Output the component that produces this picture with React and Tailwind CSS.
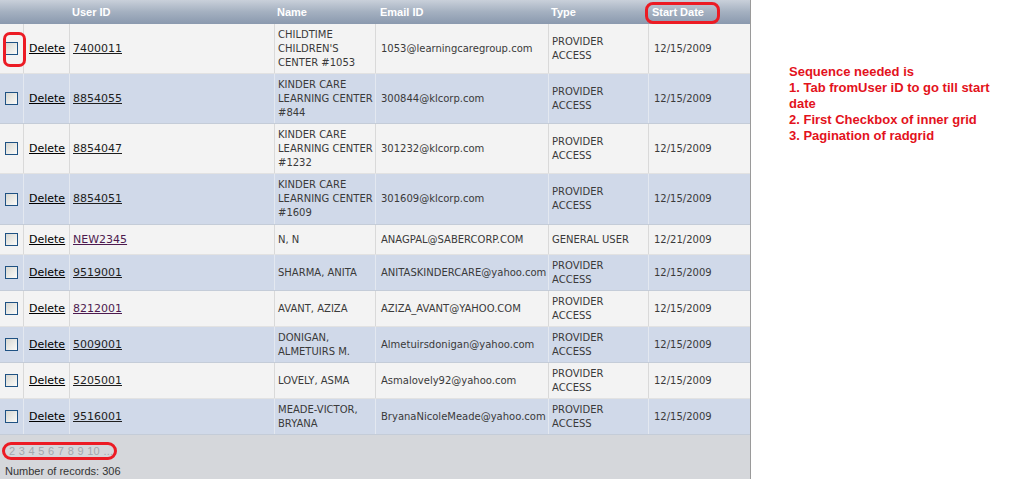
const cols = 'grid grid-cols-[23px_46px_205px_101px_173px_100px_103px]';

const users = [
  { id: '7400011', name: ['CHILDTIME', "CHILDREN'S", 'CENTER #1053'], email: '1053@learningcaregroup.com', type: ['PROVIDER', 'ACCESS'], date: '12/15/2009', h: 'h-[50px]' },
  { id: '8854055', name: ['KINDER CARE', 'LEARNING CENTER', '#844'], email: '300844@klcorp.com', type: ['PROVIDER', 'ACCESS'], date: '12/15/2009', h: 'h-[50px]' },
  { id: '8854047', name: ['KINDER CARE', 'LEARNING CENTER', '#1232'], email: '301232@klcorp.com', type: ['PROVIDER', 'ACCESS'], date: '12/15/2009', h: 'h-[50px]' },
  { id: '8854051', name: ['KINDER CARE', 'LEARNING CENTER', '#1609'], email: '301609@klcorp.com', type: ['PROVIDER', 'ACCESS'], date: '12/15/2009', h: 'h-[51px]' },
  { id: 'NEW2345', name: ['N, N'], email: 'ANAGPAL@SABERCORP.COM', type: ['GENERAL USER'], date: '12/21/2009', h: 'h-[30px]', visited: true },
  { id: '9519001', name: ['SHARMA, ANITA'], email: 'ANITASKINDERCARE@yahoo.com', type: ['PROVIDER', 'ACCESS'], date: '12/15/2009', h: 'h-[36px]' },
  { id: '8212001', name: ['AVANT, AZIZA'], email: 'AZIZA_AVANT@YAHOO.COM', type: ['PROVIDER', 'ACCESS'], date: '12/15/2009', h: 'h-[36px]', visited: true },
  { id: '5009001', name: ['DONIGAN,', 'ALMETUIRS M.'], email: 'Almetuirsdonigan@yahoo.com', type: ['PROVIDER', 'ACCESS'], date: '12/15/2009', h: 'h-[36px]' },
  { id: '5205001', name: ['LOVELY, ASMA'], email: 'Asmalovely92@yahoo.com', type: ['PROVIDER', 'ACCESS'], date: '12/15/2009', h: 'h-[36px]' },
  { id: '9516001', name: ['MEADE-VICTOR,', 'BRYANA'], email: 'BryanaNicoleMeade@yahoo.com', type: ['PROVIDER', 'ACCESS'], date: '12/15/2009', h: 'h-[36px]' },
];

function CheckBox() {
  return <span className="block w-[13px] h-[13px] border border-[#1f5283] bg-linear-to-br from-[#d8d8d2] to-[#fbfbf9]" />;
}

function Lines({ lines }) {
  return (
    <div className="whitespace-nowrap">
      {lines.map((l) => (
        <div key={l}>{l}</div>
      ))}
    </div>
  );
}

function UserRow({ u, alt }) {
  const bg = alt ? 'bg-[#d0d9e9] border-b border-[#c4ccd8]' : 'bg-[#f3f3f3] border-b border-[#e2e2e2]';
  const line = alt ? 'border-l border-[#e3e8f0]' : 'border-l border-[#d9d9d9]';
  return (
    <div className={`${cols} ${u.h} ${bg} text-[10px] leading-[14px] text-[#3a3a3a] font-['DejaVu_Sans',sans-serif]`}>
      <div className="flex items-center justify-center">
        <CheckBox />
      </div>
      <div className={`flex items-center pl-[5px] ${line}`}>
        <a className="text-[11px] text-black underline">Delete</a>
      </div>
      <div className={`flex items-center pl-[3px] ${line}`}>
        <a className={`text-[11px] underline ${u.visited ? 'text-[#4d1a4f]' : 'text-[#1e1e1e]'}`}>{u.id}</a>
      </div>
      <div className={`flex items-center pl-[3px] ${line}`}>
        <Lines lines={u.name} />
      </div>
      <div className={`flex items-center pl-[5px] whitespace-nowrap ${line}`}>{u.email}</div>
      <div className={`flex items-center pl-[3px] ${line}`}>
        <Lines lines={u.type} />
      </div>
      <div className={`flex items-center pl-[5px] ${line}`}>{u.date}</div>
    </div>
  );
}

export default function App() {
  return (
    <div className="flex w-[1019px] h-[479px] bg-white overflow-hidden">
      <div className="relative w-[751px] h-full flex flex-col border-r border-[#9a9a9a] bg-[#d5d7db]">
        {/* header */}
        <div className={`${cols} h-[24px] bg-linear-to-b from-[#c9d0da] via-[#a4b0c0] to-[#8a99ae] text-[11px] font-bold text-white font-['Liberation_Sans',Arial,sans-serif]`}>
          <div />
          <div />
          <div className="flex items-center pl-[3px]">User ID</div>
          <div className="flex items-center pl-[3px]">Name</div>
          <div className="flex items-center pl-[5px]">Email ID</div>
          <div className="flex items-center pl-[3px]">Type</div>
          <div className="flex items-center pl-[4px]">Start Date</div>
        </div>

        {users.map((u, i) => (
          <UserRow key={u.id} u={u} alt={i % 2 === 1} />
        ))}

        {/* pager */}
        <div className="flex-1 px-[5px] pt-[9px] text-[11px] leading-[14px] font-['Liberation_Sans',Arial,sans-serif]">
          <div className="pl-[4px] text-[#a3a7ae] tracking-[0.3px]">2 3 4 5 6 7 8 9 10 ...</div>
          <div className="mt-[6px] text-[#333]">Number of records: 306</div>
        </div>

        {/* red callouts */}
        <span className="absolute left-[3px] top-[32px] w-[23px] h-[35px] border-[3px] border-[#ec1b24] rounded-[7px]" />
        <span className="absolute left-[645px] top-[2px] w-[75px] h-[22px] border-[3px] border-[#ec1b24] rounded-[8px]" />
        <span className="absolute left-[2px] top-[442px] w-[115px] h-[18px] border-[3px] border-[#ec1b24] rounded-[9px]" />
      </div>

      <div className="ml-[38px] pt-[64px] w-[225px] text-[13px] leading-[16px] font-bold text-[#e3121c] font-['Liberation_Sans',Arial,sans-serif]">
        <div>Sequence needed is</div>
        <div>1. Tab fromUser iD to go till start date</div>
        <div>2. First Checkbox of inner grid</div>
        <div>3. Pagination of radgrid</div>
      </div>
    </div>
  );
}
